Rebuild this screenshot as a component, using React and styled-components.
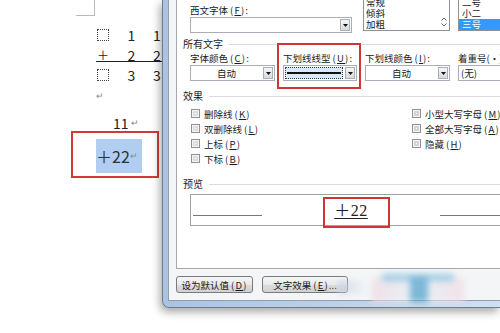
import React from 'react';
import styled, { createGlobalStyle } from 'styled-components';

const Global = createGlobalStyle`
  html, body { margin: 0; padding: 0; background: #fff; }
  body { width: 500px; height: 333px; overflow: hidden; font-family: "Noto Sans CJK SC", sans-serif; }
`;

const Screen = styled.div`
  position: relative;
  display: flex;
  align-items: flex-start;
  width: 500px;
  height: 333px;
  overflow: hidden;
  background: #fff;
`;

/* ---------- document side ---------- */
const Doc = styled.div`
  width: 162px;
  flex-shrink: 0;
  overflow: hidden;
  display: flex;
  flex-direction: column;
  color: #222;
  font-family: "Noto Sans CJK SC", sans-serif;
`;
const CornerMark = styled.div`
  margin-left: 76px;
  width: 18px;
  height: 15px;
  border-right: 1px solid #b9b9b9;
  border-bottom: 1px solid #b9b9b9;
`;
const MathRow = styled.div`
  margin-left: 96px;
  width: 73px;
  height: 20px;
  display: grid;
  grid-template-columns: 22px 27px 24px;
  align-items: center;
  font-size: 14px;
  line-height: 20px;
  margin-top: ${p => p.$first ? '9px' : '0'};
  background: ${p => p.$rule ? 'linear-gradient(#222, #222) 0 16px / 100% 1px no-repeat' : 'none'};
`;
const MathCell = styled.span`
  text-align: center;
`;
const MarkCell = styled.span`
  display: flex;
  padding-left: 1px;
  font-size: 12px;
`;
const PlaceBox = styled.span`
  width: 10px;
  height: 10px;
  border: 1px dotted #444;
`;
const ParaMark = styled.span`
  font-size: ${p => p.$size || 9}px;
  color: #8a8a8a;
  margin-left: ${p => p.$gap || 0}px;
`;
const ParaLine = styled.div`
  margin-left: ${p => p.$indent}px;
  margin-top: ${p => p.$top}px;
  height: ${p => p.$h}px;
  line-height: ${p => p.$h}px;
  font-size: 14px;
  display: flex;
  align-items: center;
`;
const RedFrame = styled.div`
  margin-left: 71px;
  width: 84px;
  height: 43px;
  border: 2px solid #d23a3a;
  display: flex;
  align-items: flex-start;
`;
const Highlight = styled.div`
  margin: 6px 0 0 23px;
  width: 46px;
  height: 34px;
  background: #b1cdef;
  display: flex;
  align-items: center;
  font-size: 16px;
  color: #2a3440;
  line-height: 34px;
`;

/* ---------- dialog ---------- */
const Dialog = styled.div`
  flex: 1;
  min-width: 0;
  height: 308px;
  box-sizing: border-box;
  display: flex;
  background: linear-gradient(90deg, #a9c3e0, #cfe0f2);
  border-left: 1px solid #6c7b90;
  border-bottom: 1px solid #6c7b90;
  border-bottom-left-radius: 7px;
  padding: 0 0 6px 5px;
  box-shadow: -2px 4px 9px rgba(0, 0, 0, 0.35);
`;
const Body = styled.div`
  flex: 1;
  min-width: 0;
  display: flex;
  flex-direction: column;
  padding-left: 7px;
  background: #f4f5f6;
  border-left: 1px solid #8f9db0;
  border-bottom: 1px solid #8f9db0;
  font-size: 9.5px;
  color: #1b1b1b;
`;
const TabPanel = styled.div`
  height: 269px;
  box-sizing: border-box;
  background: #fff;
  border-left: 1px solid #a9a9a9;
  border-bottom: 1px solid #a9a9a9;
  padding-left: 6px;
  display: flex;
  flex-direction: column;
`;
const TopRow = styled.div`
  height: 33px;
  display: flex;
  align-items: flex-end;
  padding-left: 7px;
`;
const FontField = styled.div`
  width: 162px;
  flex-shrink: 0;
  display: flex;
  flex-direction: column;
`;
const Label = styled.div`
  line-height: 14px;
  height: 14px;
  white-space: nowrap;
`;
const Mnemonic = styled.span`
  letter-spacing: 1.2px;
  margin-left: 2px;
`;
const Combo = styled.div`
  display: flex;
  height: 16px;
  box-sizing: border-box;
  border: 1px solid #a9aeb6;
  background: #fff;
`;
const ComboValue = styled.div`
  flex: 1;
  display: flex;
  align-items: center;
  justify-content: ${p => p.$left ? 'flex-start' : 'center'};
  padding-left: ${p => p.$left ? '2px' : '0'};
  line-height: 14px;
`;
const ComboButton = styled.div`
  width: 10px;
  margin: 1px;
  box-sizing: border-box;
  border: 1px solid #aab0ba;
  background: linear-gradient(#f6f6f6, #d9dadc);
  display: flex;
  align-items: center;
  justify-content: center;
`;
const LineValue = styled.div`
  flex: 1;
  margin: 1px;
  border: 1px dotted #3a3a3a;
  background: #d6eafc;
  display: flex;
  align-items: center;
  padding: 0 1px;
`;
const LineSample = styled.div`
  flex: 1;
  height: 2px;
  background: #111;
`;
const ListBox = styled.div`
  width: ${p => p.$w}px;
  margin-left: ${p => p.$ml}px;
  margin-bottom: 2px;
  height: 44px;
  box-sizing: border-box;
  border: 1px solid #8c9099;
  background: #fff;
  display: flex;
  flex-shrink: 0;
  overflow: hidden;
`;
const ListItems = styled.div`
  flex: 1;
  display: flex;
  flex-direction: column;
  justify-content: flex-end;
`;
const ListItem = styled.div`
  height: 11px;
  line-height: 11px;
  padding-left: ${p => p.$pad}px;
  background: ${p => p.$sel ? '#3399ff' : 'transparent'};
  color: ${p => p.$sel ? '#fff' : '#1b1b1b'};
`;
const ScrollCol = styled.div`
  width: 10px;
  display: flex;
  flex-direction: column;
  justify-content: flex-end;
  align-items: center;
  padding-bottom: 3px;
  gap: 2px;
`;
const Heading = styled.div`
  display: flex;
  align-items: center;
  height: 12px;
  line-height: 12px;
  margin-top: ${p => p.$top}px;
  font-size: 10px;
  &::after {
    content: '';
    flex: 1;
    margin-left: 6px;
    border-top: 1px solid #d9dde2;
  }
`;
const FieldsRow = styled.div`
  margin-top: 1px;
  padding-left: 7px;
  display: grid;
  grid-template-columns: 85px 74px 85px 80px;
  column-gap: 8px;
`;
const Field = styled.div`
  position: relative;
  display: flex;
  flex-direction: column;
  ${p => p.$marked && `
    &::after {
      content: '';
      position: absolute;
      top: -8px; left: -6px; right: -4px; bottom: -8px;
      border: 2px solid #cf3535;
      pointer-events: none;
    }
  `}
`;
const EffectsGrid = styled.div`
  margin-top: 4px;
  padding-left: 8px;
  display: grid;
  grid-template-columns: 221px 1fr;
  grid-template-rows: repeat(4, 15px);
  grid-auto-flow: column;
`;
const Check = styled.label`
  display: flex;
  align-items: center;
  white-space: nowrap;
`;
const CheckBox = styled.span`
  width: 9px;
  height: 9px;
  box-sizing: border-box;
  margin-right: 4px;
  border: 1px solid #8f9193;
  background: #fff;
  box-shadow: inset 0 0 0 1px #f4f4f4, inset 0 0 0 3px ${p => p.$dim ? '#d3d3d3' : '#dedede'};
`;
const PreviewBox = styled.div`
  margin: 4px 0 0 7px;
  width: 322px;
  height: 32px;
  box-sizing: border-box;
  border: 1px solid #a3a3a3;
  display: flex;
  align-items: flex-end;
  justify-content: space-between;
  padding: 0 2px 9px 2px;
`;
const PreviewLine = styled.div`
  width: 69px;
  height: 1.5px;
  background: #777;
`;
const PreviewText = styled.span`
  position: relative;
  margin-bottom: -4px;
  font-family: "Liberation Serif", "Noto Sans CJK SC", serif;
  font-size: 16px;
  line-height: 18px;
  letter-spacing: 0.5px;
  color: #222;
  text-decoration: underline;
  text-decoration-thickness: 1px;
  text-underline-offset: 2px;
  &::after {
    content: '';
    position: absolute;
    top: -5px; left: -11px; right: -22px; bottom: -8px;
    border: 2px solid #cf3535;
  }
`;
const ButtonRow = styled.div`
  margin-top: 7px;
  display: flex;
  gap: 9px;
`;
const Button = styled.div`
  width: ${p => p.$w}px;
  height: 17px;
  box-sizing: border-box;
  border: 1px solid #7a7a7a;
  border-radius: 3px;
  background: linear-gradient(#f6f6f6 0%, #e9e9e9 50%, #dcdcdc 51%, #d2d2d2 100%);
  display: flex;
  align-items: center;
  justify-content: center;
  white-space: nowrap;
  flex-shrink: 0;
`;
const Watermark = styled.div`
  position: absolute;
  left: 338px;
  top: 264px;
  width: 132px;
  height: 44px;
  filter: blur(3px);
  opacity: 0.8;
  background:
    linear-gradient(#5fa9d1, #5fa9d1) 72px 12px / 18px 26px no-repeat,
    linear-gradient(#8cc3e0, #8cc3e0) 44px 10px / 72px 7px no-repeat,
    linear-gradient(90deg, #efdbe4, #e6f1f8, #f0dde5) 34px 14px / 92px 24px no-repeat,
    linear-gradient(90deg, #c9d6e6, transparent) 0 16px / 30px 14px no-repeat;
`;

const Arrow = ({ up }) => (
  <svg width="6" height="4" viewBox="0 0 6 4">
    <path d={up ? 'M0.5 3.5 L3 1 L5.5 3.5' : 'M0.5 0.5 L3 3 L5.5 0.5'} fill="none" stroke="#6a6a6a" strokeWidth="1" />
  </svg>
);
const DropTri = () => (
  <svg width="5" height="3" viewBox="0 0 5 3"><path d="M0 0h5L2.5 3z" fill="#111" /></svg>
);
const M = ({ k }) => <Mnemonic>(<u>{k}</u>)</Mnemonic>;

export default function App() {
  return (
    <>
      <Global />
      <Screen>
        <Doc>
          <CornerMark />
          <MathRow $first>
            <MarkCell><PlaceBox /></MarkCell>
            <MathCell>1</MathCell>
            <MathCell>1</MathCell>
          </MathRow>
          <MathRow $rule>
            <MarkCell>＋</MarkCell>
            <MathCell>2</MathCell>
            <MathCell>2</MathCell>
          </MathRow>
          <MathRow>
            <MarkCell><PlaceBox /></MarkCell>
            <MathCell>3</MathCell>
            <MathCell>3</MathCell>
          </MathRow>
          <ParaLine $indent={96} $top={5} $h={12}><ParaMark>↵</ParaMark></ParaLine>
          <ParaLine $indent={113} $top={13} $h={16}>11<ParaMark $gap={2}>↵</ParaMark></ParaLine>
          <RedFrame>
            <Highlight>＋22<ParaMark $size={9}>↵</ParaMark></Highlight>
          </RedFrame>
        </Doc>

        <Dialog>
          <Body>
            <TabPanel>
              <TopRow>
                <FontField>
                  <Label>西文字体<M k="F" />:</Label>
                  <Combo>
                    <ComboValue />
                    <ComboButton><DropTri /></ComboButton>
                  </Combo>
                </FontField>
                <ListBox $w={87} $ml={11}>
                  <ListItems>
                    <ListItem $pad={2}>常规</ListItem>
                    <ListItem $pad={2}>倾斜</ListItem>
                    <ListItem $pad={2}>加粗</ListItem>
                  </ListItems>
                  <ScrollCol><Arrow up /><Arrow /></ScrollCol>
                </ListBox>
                <ListBox $w={60} $ml={8}>
                  <ListItems>
                    <ListItem $pad={3}>二号</ListItem>
                    <ListItem $pad={3}>小二</ListItem>
                    <ListItem $pad={3} $sel>三号</ListItem>
                  </ListItems>
                </ListBox>
              </TopRow>

              <Heading $top={5}>所有文字</Heading>
              <FieldsRow>
                <Field>
                  <Label>字体颜色<M k="C" />:</Label>
                  <Combo>
                    <ComboValue>自动</ComboValue>
                    <ComboButton><DropTri /></ComboButton>
                  </Combo>
                </Field>
                <Field $marked>
                  <Label>下划线线型<M k="U" />:</Label>
                  <Combo>
                    <LineValue><LineSample /></LineValue>
                    <ComboButton><DropTri /></ComboButton>
                  </Combo>
                </Field>
                <Field>
                  <Label>下划线颜色<M k="I" />:</Label>
                  <Combo>
                    <ComboValue>自动</ComboValue>
                    <ComboButton><DropTri /></ComboButton>
                  </Combo>
                </Field>
                <Field>
                  <Label>着重号(·):</Label>
                  <Combo>
                    <ComboValue $left>(无)</ComboValue>
                    <ComboButton><DropTri /></ComboButton>
                  </Combo>
                </Field>
              </FieldsRow>

              <Heading $top={9}>效果</Heading>
              <EffectsGrid>
                <Check><CheckBox />删除线<M k="K" /></Check>
                <Check><CheckBox />双删除线<M k="L" /></Check>
                <Check><CheckBox />上标<M k="P" /></Check>
                <Check><CheckBox />下标<M k="B" /></Check>
                <Check><CheckBox $dim />小型大写字母<M k="M" /></Check>
                <Check><CheckBox $dim />全部大写字母<M k="A" /></Check>
                <Check><CheckBox $dim />隐藏<M k="H" /></Check>
              </EffectsGrid>

              <Heading $top={12}>预览</Heading>
              <PreviewBox>
                <PreviewLine />
                <PreviewText>＋22</PreviewText>
                <PreviewLine />
              </PreviewBox>
            </TabPanel>
            <ButtonRow>
              <Button $w={77}>设为默认值<M k="D" /></Button>
              <Button $w={86}>文字效果<M k="E" />...</Button>
            </ButtonRow>
          </Body>
        </Dialog>
        <Watermark />
      </Screen>
    </>
  );
}
